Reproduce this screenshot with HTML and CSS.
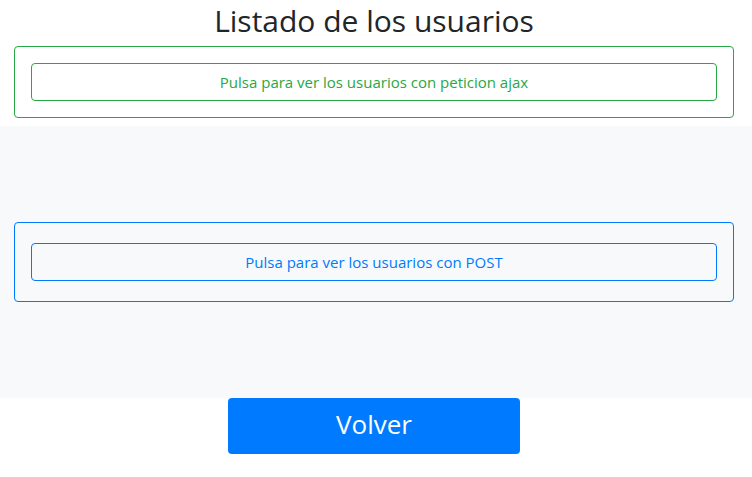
FILE: index.html
```html
<!DOCTYPE html>
<html lang="es">
<head>
<meta charset="utf-8">
<title>Listado de los usuarios</title>
<link rel="stylesheet" href="styles.css">
</head>
<body>
<div class="page">
  <h2 class="title">Listado de los usuarios</h2>
  <div class="panel panel-green">
    <button class="btn btn-green" type="button">Pulsa para ver los usuarios con peticion ajax</button>
  </div>
  <section class="band">
    <form class="panel panel-blue">
      <button class="btn btn-blue" type="button">Pulsa para ver los usuarios con POST</button>
    </form>
  </section>
  <div class="actions">
    <button class="btn-volver" type="button">Volver</button>
  </div>
</div>
</body>
</html>
```
FILE: styles.css
```css
* { box-sizing: border-box; }
html, body { margin: 0; padding: 0; background: #fff; }
body {
  font-family: "Open Sans", "Noto Sans", sans-serif;
  color: #212529;
}
.page { display: flex; flex-direction: column; }
.title {
  margin: 0 18px 8px 14px;
  padding-top: 3px;
  font-size: 30px;
  font-weight: 400;
  line-height: 35px;
  text-align: center;
  color: #212529;
}
.panel {
  margin: 0 18px 0 14px;
  border-radius: 4px;
  display: flex;
}
.panel-green {
  border: 1px solid #28a745;
  padding: 16px;
}
.band {
  margin-top: 8px;
  background: #f8f9fa;
  padding: 96px 0;
}
.panel-blue {
  border: 1px solid #007bff;
  padding: 20px 16px;
}
.btn {
  flex: 1;
  height: 38px;
  background: transparent;
  border-radius: 4px;
  font-family: inherit;
  font-size: 15px;
  line-height: 24px;
  text-align: center;
  padding: 6px 12px;
}
.btn-green { border: 1px solid #28a745; color: #28a745; }
.btn-blue { border: 1px solid #007bff; color: #007bff; }
.actions {
  margin: 0 18px 0 14px;
  display: flex;
  justify-content: center;
}
.btn-volver {
  width: 292px;
  height: 56px;
  padding: 0 0 5px;
  background: #007bff;
  color: #fff;
  border: none;
  border-radius: 4px;
  font-family: inherit;
  font-size: 26px;
  line-height: 36px;
}
```
